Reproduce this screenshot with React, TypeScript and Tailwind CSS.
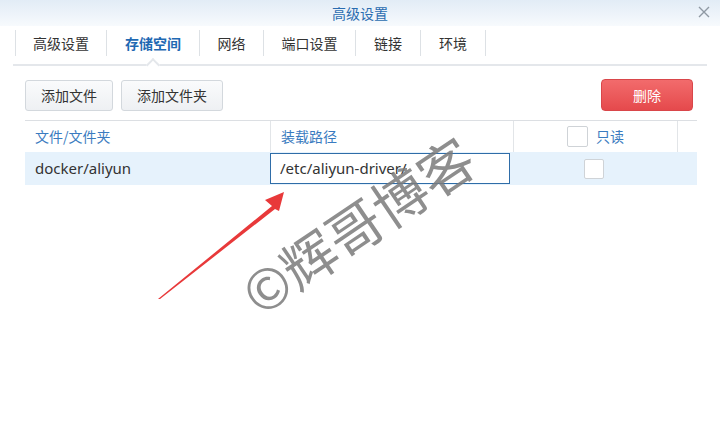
const tabs = [
  { label: "高级设置", w: "w-[91px]" },
  { label: "存储空间", w: "w-[93px]" },
  { label: "网络", w: "w-[64px]" },
  { label: "端口设置", w: "w-[92px]" },
  { label: "链接", w: "w-[65px]" },
  { label: "环境", w: "w-[66px]" },
];

const cjk = { fontFamily: '"Noto Sans CJK SC", "Noto Sans", sans-serif' };
const latin = { fontFamily: '"Noto Sans", "Noto Sans CJK SC", sans-serif' };

export default function App() {
  return (
    <div className="relative w-[720px] h-[447px] overflow-hidden bg-white" style={cjk}>
      {/* 标题栏 */}
      <div className="relative h-[26px] bg-gradient-to-b from-[#e2ecf6] to-[#f7fafd] flex items-center justify-center">
        <span className="text-[14px] text-[#2a6cb0] leading-none">高级设置</span>
        <svg className="absolute right-[10px] top-[6px]" width="12" height="12" viewBox="0 0 12 12">
          <path d="M1 1L11 11M11 1L1 11" stroke="#8f99a3" strokeWidth="1.4" />
        </svg>
      </div>

      {/* 标签页 */}
      <div className="relative mx-[13px] mt-[4px] pl-[2px] pb-[8px] border-b-2 border-[#e4e7eb] flex">
        {tabs.map((t, i) => (
          <div
            key={t.label}
            className={
              "relative h-[26px] flex items-center justify-center border-l border-[#dde1e5] text-[14px] leading-none " +
              t.w +
              " " +
              (i === tabs.length - 1 ? "border-r " : "") +
              (i === 1 ? "text-[#1f69b3] font-bold" : "text-[#333]")
            }
          >
            {t.label}
            {i === 1 && (
              <span className="absolute left-1/2 -bottom-[14px] -ml-[5px] w-[10px] h-[10px] rotate-45 bg-white border-l-2 border-t-2 border-[#e4e7eb]" />
            )}
          </div>
        ))}
      </div>

      {/* 工具栏 */}
      <div className="flex items-center px-[25px] pr-[27px] mt-[13px] gap-[8px]">
        <button className="h-[31px] w-[88px] rounded-[3px] border border-[#d3d8dd] bg-gradient-to-b from-[#fafbfc] to-[#eef0f3] text-[14px] text-[#333]">
          添加文件
        </button>
        <button className="h-[31px] w-[102px] rounded-[3px] border border-[#d3d8dd] bg-gradient-to-b from-[#fafbfc] to-[#eef0f3] text-[14px] text-[#333]">
          添加文件夹
        </button>
        <div className="flex-1" />
        <button className="h-[32px] w-[92px] rounded-[4px] border border-[#d9464a] bg-gradient-to-b from-[#f26b6c] to-[#e5494c] text-[14px] text-white">
          删除
        </button>
      </div>

      {/* 表格 */}
      <div className="mx-[25px] w-[672px] mt-[9px] border-t border-[#dcdfe3]">
        <div className="flex h-[31px] items-stretch text-[14px] text-[#3a7bc0]">
          <div className="w-[245px] pl-[10px] flex items-center">文件/文件夹</div>
          <div className="w-[243px] pl-[10px] flex items-center border-l border-[#e2e5e8]">装载路径</div>
          <div className="w-[165px] flex items-center justify-center gap-[8px] border-l border-r border-[#e2e5e8]">
            <span className="w-[21px] h-[21px] rounded-[2px] border border-[#cfd3d7] bg-white" />
            <span>只读</span>
          </div>
        </div>
        <div className="flex h-[33px] items-stretch bg-[#e6f2fc]">
          <div className="w-[245px] pl-[10px] flex items-center text-[15px] text-[#333]" style={latin}>
            docker/aliyun
          </div>
          <div className="w-[240px] my-[1px] border border-[#2f6da8] bg-white pl-[9px] flex items-center text-[15px] text-[#333]" style={latin}>
            /etc/aliyun-driver/
          </div>
          <div className="w-[168px] flex items-center justify-center">
            <span className="w-[20px] h-[20px] rounded-[2px] border border-[#cfd3d7] bg-white" />
          </div>
        </div>
      </div>

      {/* 箭头 */}
      <svg className="absolute left-0 top-0 pointer-events-none" width="720" height="447" viewBox="0 0 720 447">
        <polygon points="158,299 272,206 265,200 284,192 279,211 275,209 160,299" fill="#e8393a" />
      </svg>

      {/* 水印 */}
      <div
        className="absolute left-[357px] top-[224px] -translate-x-1/2 -translate-y-1/2 -rotate-[34deg] whitespace-nowrap text-[55px] font-normal leading-none text-[#7a7a7a]/85"
      >
        ©辉哥博客
      </div>
    </div>
  );
}
